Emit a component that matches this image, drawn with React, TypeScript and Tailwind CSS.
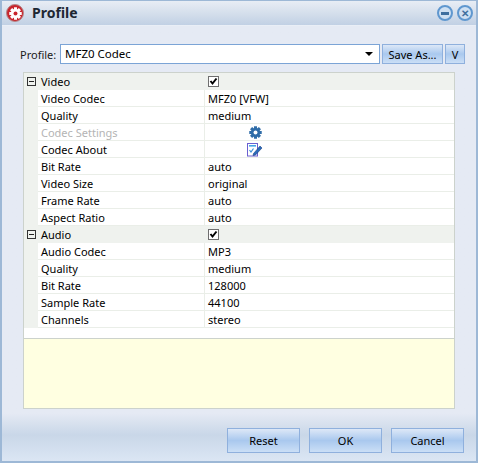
import React from "react";

type Row = { name: string; value?: string; kind?: "group" | "disabled" | "gear" | "edit"; checked?: boolean };

const rows: Row[] = [
  { name: "Video", kind: "group", checked: true },
  { name: "Video Codec", value: "MFZ0 [VFW]" },
  { name: "Quality", value: "medium" },
  { name: "Codec Settings", kind: "gear" },
  { name: "Codec About", kind: "edit" },
  { name: "Bit Rate", value: "auto" },
  { name: "Video Size", value: "original" },
  { name: "Frame Rate", value: "auto" },
  { name: "Aspect Ratio", value: "auto" },
  { name: "Audio", kind: "group", checked: true },
  { name: "Audio Codec", value: "MP3" },
  { name: "Quality", value: "medium" },
  { name: "Bit Rate", value: "128000" },
  { name: "Sample Rate", value: "44100" },
  { name: "Channels", value: "stereo" },
];

function Gear({ size = 13, color = "#2f6ca8", hole = "#fff" }: { size?: number; color?: string; hole?: string }) {
  return (
    <svg width={size} height={size} viewBox="0 0 24 24">
      <g fill={color}>
        <circle cx="12" cy="12" r="8.5" />
        {[0, 45, 90, 135, 180, 225, 270, 315].map((a) => (
          <rect key={a} x="9.2" y="0.5" width="5.6" height="6" transform={`rotate(${a} 12 12)`} />
        ))}
      </g>
      <circle cx="12" cy="12" r="3.6" fill={hole} />
    </svg>
  );
}

function EditIcon() {
  return (
    <svg width="16" height="15" viewBox="0 0 16 15">
      <rect x="0.5" y="1.5" width="10" height="12.5" fill="#fff" stroke="#6a5fd0" />
      <rect x="2" y="3" width="7" height="1.6" fill="#45a5e8" />
      <path d="M2.5 8 L4 10 L6.5 6.5" fill="none" stroke="#3a8fd8" strokeWidth="1.2" />
      <path d="M6.5 11.5 L13 4 L15 6 L8.5 13 L6 13.5 Z" fill="#2a6bb8" stroke="#1c3f86" strokeWidth="0.6" />
    </svg>
  );
}

function Check() {
  return (
    <span className="flex h-[11px] w-[11px] items-center justify-center border border-[#6f6f6f] bg-white">
      <svg width="9" height="9" viewBox="0 0 9 9">
        <path d="M1.5 4 L3.5 6.5 L7.5 1.5" fill="none" stroke="#000" strokeWidth="2" />
      </svg>
    </span>
  );
}

function Minus() {
  return (
    <span className="relative block h-[9px] w-[9px] border border-[#333] bg-transparent">
      <span className="absolute left-[1px] top-[3px] h-[1px] w-[5px] bg-[#222]" />
    </span>
  );
}

function PropRow({ row }: { row: Row }) {
  const group = row.kind === "group";
  return (
    <div className={`flex h-[17px] items-stretch ${group ? "bg-[#eff2ee]" : "bg-white"}`}>
      <div className="flex w-[14px] shrink-0 items-center justify-center bg-[#eff2ee]">{group && <Minus />}</div>
      <div
        className={`flex w-[166px] shrink-0 items-center border-b border-[#eaeee8] pl-[3px] ${
          row.kind === "gear" ? "text-[#b4b4b4]" : "text-black"
        } ${group ? "border-transparent" : ""}`}
      >
        {row.name}
      </div>
      <div
        className={`flex min-w-0 flex-1 items-center border-b border-l pl-[3px] ${
          group ? "border-transparent" : "border-[#eaeee8]"
        }`}
      >
        {row.checked && <Check />}
        {row.value}
        {row.kind === "gear" && (
          <span className="ml-[41px]">
            <Gear />
          </span>
        )}
        {row.kind === "edit" && (
          <span className="ml-[39px]">
            <EditIcon />
          </span>
        )}
      </div>
    </div>
  );
}

const btn =
  "flex shrink-0 items-center justify-center border border-[#8fb0dd] bg-gradient-to-b from-[#dde8f7] via-[#a9c8ee] to-[#cbdff6] text-black";

export default function App() {
  return (
    <div className="flex h-[463px] w-[478px] flex-col border-x-2 border-b-2 border-t border-[#9db8d6] bg-[#e5eaf4] font-['Noto_Sans',sans-serif] text-[11px] leading-none text-black">
      <div className="flex h-[25px] shrink-0 items-center border-b border-[#e9eef6] bg-gradient-to-b from-[#e8edf5] via-[#d5dfec] to-[#c1d0e4] pl-[4px] pr-[3px]">
        <span className="flex h-[18px] w-[18px] items-center justify-center rounded-full border border-[#b5878a] bg-[#c8242c]">
          <Gear size={13} color="#fff" hole="#c8242c" />
        </span>
        <span className="ml-[8px] text-[14px] font-bold text-[#1d2733]">Profile</span>
        <div className="ml-auto flex gap-[4px]">
          <span className="flex h-[16px] w-[16px] items-center justify-center rounded-full border-2 border-[#5f97cf] bg-[#cfe0f2]">
            <span className="h-[3px] w-[8px] bg-[#3e6f9f]" />
          </span>
          <span className="flex h-[16px] w-[16px] items-center justify-center rounded-full border-2 border-[#5f97cf] bg-[#cfe0f2] text-[10px] font-bold text-[#3e6f9f]">
            ✕
          </span>
        </div>
      </div>

      <div className="flex min-h-0 flex-1 flex-col bg-gradient-to-b from-[#e5eaf4] from-[89%] via-[#c9d7e8] via-[94%] to-[#dbe6f4] pl-[21px] pr-[21px]">
        <div className="-mr-[8px] mt-[18px] flex h-[20px] items-center">
          <span className="-ml-[3px] w-[40px] shrink-0 text-[#1a1a1a]">Profile:</span>
          <div className="flex h-[20px] w-[320px] shrink-0 items-center justify-between border border-[#7ba4d6] bg-white pl-[4px] pr-[6px] text-[11.5px]">
            MFZ0 Codec
            <span className="h-0 w-0 border-x-[4px] border-t-[4px] border-x-transparent border-t-black" />
          </div>
          <div className={`${btn} ml-[2px] h-[20px] w-[61px]`}>Save As...</div>
          <div className={`${btn} ml-[2px] h-[20px] w-[20px]`}>V</div>
        </div>

        <div className="mt-[8px] flex h-[337px] w-[432px] shrink-0 flex-col border border-[#ccd2cc] bg-white">
          {rows.map((r, i) => (
            <PropRow key={i} row={r} />
          ))}
          <div className="mt-[10px] flex-1 border-t border-[#ccd2cc] bg-[#ffffe1]" />
        </div>

        <div className="-mr-[9px] mt-[19px] flex justify-end gap-[9px]">
          <div className={`${btn} h-[25px] w-[73px]`}>Reset</div>
          <div className={`${btn} h-[25px] w-[73px]`}>OK</div>
          <div className={`${btn} h-[25px] w-[73px]`}>Cancel</div>
        </div>
      </div>
    </div>
  );
}
